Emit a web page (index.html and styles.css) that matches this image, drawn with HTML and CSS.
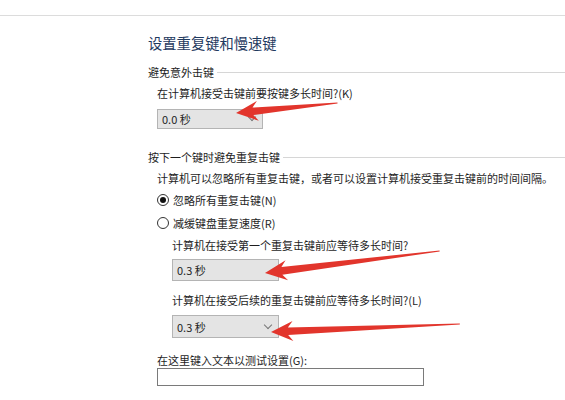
FILE: index.html
```html
<!DOCTYPE html>
<html lang="zh-CN">
<head>
    <meta charset="UTF-8">
    <title>设置重复键和慢速键</title>
    <link rel="stylesheet" href="styles.css">
</head>
<body>
    <div class="topbar"></div>
    <div class="page">
        <h1 class="title">设置重复键和慢速键</h1>

        <div class="group-label"><span>避免意外击键</span></div>
        <div class="indent">
            <div class="question q1">在计算机接受击键前要按键多长时间?(K)</div>
            <div class="select s1"><span>0.0 秒</span><span class="chev"></span></div>
        </div>

        <div class="group-label g2"><span>按下一个键时避免重复击键</span></div>
        <div class="indent">
            <div class="desc">计算机可以忽略所有重复击键，或者可以设置计算机接受重复击键前的时间间隔。</div>
            <label class="radio r1"><span class="dot checked"></span>忽略所有重复击键(N)</label>
            <label class="radio r2"><span class="dot"></span>减缓键盘重复速度(R)</label>
            <div class="sub">
                <div class="question q2">计算机在接受第一个重复击键前应等待多长时间?</div>
                <div class="select s2"><span>0.3 秒</span></div>
                <div class="question q3">计算机在接受后续的重复击键前应等待多长时间?(L)</div>
                <div class="select s3"><span>0.3 秒</span><span class="chev"></span></div>
            </div>
            <div class="question q4">在这里键入文本以测试设置(G):</div>
            <div class="textbox"></div>
        </div>
    </div>

    <svg class="arrows" width="565" height="400" viewBox="0 0 565 400">
        <g fill="#e2352c">
            <polygon transform="translate(236 113) rotate(-5.65)" points="0,0 22,-10 17,-3.8 102,-0.5 102,0.5 17,3.8 22,10"/>
            <polygon transform="translate(265 273) rotate(-7.2)" points="0,0 22,-10 17,-3.8 176,-0.5 176,0.5 17,3.8 22,10"/>
            <polygon transform="translate(271 332) rotate(-2.4)" points="0,0 22,-10 17,-3.8 189,-0.5 189,0.5 17,3.8 22,10"/>
        </g>
    </svg>
</body>
</html>
```

FILE: styles.css
```css
body {
    margin: 0;
    width: 565px;
    height: 400px;
    overflow: hidden;
    position: relative;
    background-color: #ffffff;
    font-family: "Noto Sans CJK SC", "Liberation Sans", sans-serif;
    font-size: 11px;
    color: #1e1e1e;
}
.topbar {
    height: 15px;
    border-bottom: 1px solid #dcdcdc;
}
.page {
    padding-left: 148px;
}
.title {
    margin: 17px 0 0 0;
    font-size: 14.3px;
    font-weight: normal;
    line-height: 20px;
    color: #1f3a5f;
}
.group-label {
    display: flex;
    align-items: center;
    margin-top: 11px;
    height: 16px;
    line-height: 16px;
}
.group-label::after {
    content: "";
    flex: 1;
    height: 1px;
    margin-left: 3px;
    background-color: #d6d6d6;
}
.group-label.g2 {
    margin-top: 20px;
}
.indent {
    padding-left: 9px;
}
.question {
    height: 16px;
    line-height: 16px;
    white-space: nowrap;
}
.q1 { margin-top: 5px; }
.q2 { margin-top: 6px; }
.q3 { margin-top: 11px; }
.q4 { margin-top: 14px; }
.select {
    position: relative;
    box-sizing: border-box;
    width: 107px;
    display: flex;
    align-items: center;
    padding-left: 4px;
    background-color: #e4e4e4;
    border: 1px solid #b4b4b4;
}
.s1 { margin-top: 8px; height: 20px; width: 106px; }
.s2 { margin-top: 6px; height: 22px; }
.s3 { margin-top: 7px; height: 23px; }
.chev {
    position: absolute;
    right: 7px;
    top: 50%;
    width: 5px;
    height: 5px;
    margin-top: -5px;
    border-right: 1px solid #777;
    border-bottom: 1px solid #777;
    transform: rotate(45deg);
}
.desc {
    margin-top: 5px;
    height: 16px;
    line-height: 16px;
    white-space: nowrap;
}
.radio {
    display: flex;
    align-items: center;
    height: 16px;
    line-height: 16px;
}
.r1 { margin-top: 6px; }
.r2 { margin-top: 7px; }
.dot {
    position: relative;
    box-sizing: border-box;
    width: 12px;
    height: 12px;
    margin-right: 4px;
    border: 1px solid #333;
    border-radius: 50%;
    background-color: #fff;
}
.dot.checked::after {
    content: "";
    position: absolute;
    left: 2px;
    top: 2px;
    width: 6px;
    height: 6px;
    border-radius: 50%;
    background-color: #111;
}
.sub {
    padding-left: 15px;
}
.textbox {
    box-sizing: border-box;
    width: 267px;
    height: 18px;
    border: 1px solid #7a7a7a;
    background-color: #fff;
}
.arrows {
    position: absolute;
    left: 0;
    top: 0;
    pointer-events: none;
}
```
